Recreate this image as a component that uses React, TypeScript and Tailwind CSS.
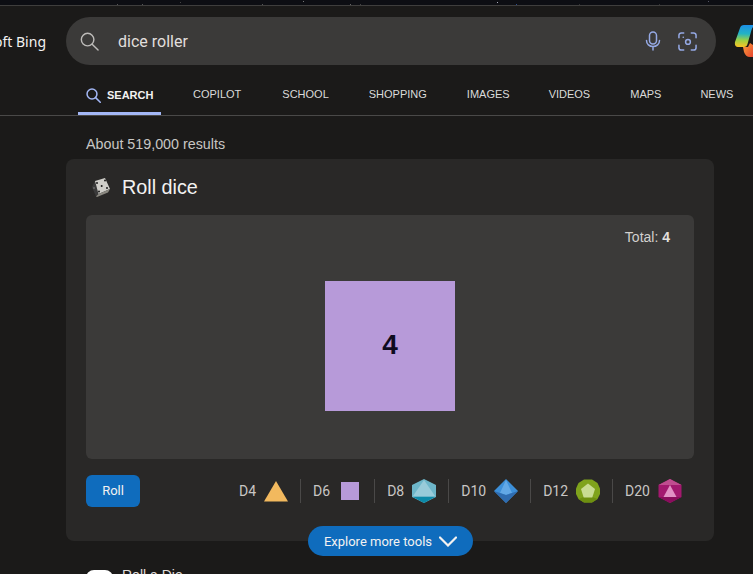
const arial = { fontFamily: '"Liberation Sans", Arial, sans-serif' };

const tabs = [
  { label: 'COPILOT', gap: '' },
  { label: 'SCHOOL', gap: 'ml-[41px]' },
  { label: 'SHOPPING', gap: 'ml-[40px]' },
  { label: 'IMAGES', gap: 'ml-[40px]' },
  { label: 'VIDEOS', gap: 'ml-[39px]' },
  { label: 'MAPS', gap: 'ml-[40px]' },
  { label: 'NEWS', gap: 'ml-[39px]' },
];

function TopStrip() {
  const dots = [
    [117, 4, '#555'], [142, 4, '#555'], [180, 2, '#444'], [262, 4, '#555'], [303, 1, '#777'], [350, 4, '#666'],
    [360, 4, '#444'], [497, 2, '#aab'], [516, 4, '#2a4a8a'], [579, 4, '#333'], [659, 4, '#333'], [708, 1, '#556'],
  ] as const;
  return (
    <svg viewBox="0 0 753 5" className="block h-[5px] w-[753px]">
      {dots.map(([x, y, c]) => (
        <rect key={x} x={x} y={y} width="1" height="1" fill={c} />
      ))}
    </svg>
  );
}

function SearchIcon({ className, width }: { className: string; width: number }) {
  return (
    <svg viewBox="0 0 20 20" fill="none" stroke="currentColor" strokeWidth={width} className={className}>
      <circle cx="8" cy="8" r="6.6" />
      <path d="M12.8 12.8 19 19" strokeLinecap="round" />
    </svg>
  );
}

function MicIcon() {
  return (
    <svg viewBox="0 0 16 20" fill="none" stroke="#95a9e4" strokeWidth="1.5" className="h-5 w-4" strokeLinecap="round">
      <rect x="4.5" y="1" width="7" height="12" rx="3.5" />
      <path d="M1.5 9.5c0 3.6 2.9 6 6.5 6s6.500-2.400 6.500-6M8 15.500V19" />
    </svg>
  );
}

function VisualIcon() {
  return (
    <svg viewBox="0 0 20 20" fill="none" stroke="#95a9e4" strokeWidth="1.600" className="h-[19px] w-[19px]" strokeLinecap="round">
      <path d="M1 6V3.500A2.500 2.500 0 0 1 3.500 1H6M14 1h2.500A2.500 2.500 0 0 1 19 3.500V6M19 14v2.500a2.500 2.500 0 0 1-2.500 2.500H14M6 19H3.500A2.500 2.500 0 0 1 1 16.500V14" />
      <circle cx="10.500" cy="10.500" r="2.500" />
      <path d="M5.500 5.500h.1" />
    </svg>
  );
}

function CopilotLogo() {
  return (
    <svg viewBox="0 0 32 34" className="h-[34px] w-8 shrink-0">
      <defs>
        <linearGradient id="cpA" x1="0.5" y1="0" x2="0.45" y2="1">
          <stop offset="0" stopColor="#1c8fe8" />
          <stop offset="0.4" stopColor="#22b3c4" />
          <stop offset="0.7" stopColor="#9dd143" />
          <stop offset="1" stopColor="#f7c326" />
        </linearGradient>
        <linearGradient id="cpB" x1="0" y1="0" x2="1" y2="1">
          <stop offset="0" stopColor="#f9a13a" />
          <stop offset="1" stopColor="#e8452f" />
        </linearGradient>
      </defs>
      <path d="M6 4C6.500 2 8 1 10 1h14c-4 0-5.500 2-6.500 5l-4 14c-.500 2-1.500 3-3.500 3H4c-2.500 0-3.500-2-3-5z" fill="url(#cpA)" />
      <path d="M9 23h5l2-4 3 2v12h-3c-3 0-5-2-6-5z" fill="url(#cpB)" />
    </svg>
  );
}

function DiceEmblem() {
  return (
    <svg viewBox="0 0 20 20" className="h-5 w-5 shrink-0">
      <path d="M1 10 4 4l3.500 13L5 19.500z" fill="#3a3a3a" />
      <path d="M4 4 14 1l5 11-11.500 5z" fill="#cfcec9" />
      <path d="M5 19.500 7.500 17 19 12l-2 3.500L6 20z" fill="#8a8880" />
      <g fill="#1c1c1c">
        <circle cx="6" cy="6" r="1" />
        <circle cx="14" cy="3.500" r="1" />
        <circle cx="10.700" cy="9" r="1" />
        <circle cx="8" cy="14.500" r="1" />
        <circle cx="16" cy="11" r="1" />
      </g>
      <circle cx="3" cy="11" r="0.700" fill="#999" />
    </svg>
  );
}

function D4() {
  return (
    <svg viewBox="0 0 24 21" className="h-[21px] w-6">
      <path d="M12 0 24 20.500H0z" fill="#f2b95e" />
    </svg>
  );
}

function D6() {
  return <div className="h-[18px] w-[18px] bg-[#b79ad9]" />;
}

function D8() {
  return (
    <svg viewBox="0 0 24 24" className="h-6 w-6">
      <path d="M12 0 24 6v12l-12 6L0 18V6z" fill="#6db6c9" />
      <path d="M12 1 23 17H1z" fill="#98cbd9" />
      <path d="M1 18h22l-11 6z" fill="#0d8aa8" />
    </svg>
  );
}

function D10() {
  return (
    <svg viewBox="0 0 24 24" className="h-6 w-6">
      <path d="M12 0 24 12 12 24 0 12z" fill="#3c8fd8" />
      <path d="M12 1 18 14l-6 2-6-2z" fill="#62a8e6" />
      <path d="M0 12l6 2 6 2 6-2 6-2-12 12z" fill="#2f6cb0" />
    </svg>
  );
}

function D12() {
  return (
    <svg viewBox="0 0 24 24" className="h-6 w-6">
      <path d="M8 .5h8l5.500 3.500L24 9.500v5.500l-2.500 5L16 23.500H8L2.500 20 0 15V9.500L2.500 4z" fill="#7fa31c" />
      <path d="M2.500 20 8 23.500h8l5.500-3.500-5-2h-9z" fill="#6e9010" />
      <path d="M12 4.500 19 10l-2.700 8.500H7.700L5 10z" fill="#c9dc93" />
    </svg>
  );
}

function D20() {
  return (
    <svg viewBox="0 0 24 24" className="h-6 w-6">
      <path d="M12 0 23.500 6v12L12 24 .5 18V6z" fill="#a3196f" />
      <path d="M12 0 23.500 6 12 6 .5 6z" fill="#c04d90" />
      <path d="M12 6 18.500 18h-13z" fill="#e291c4" />
      <path d="M.5 18h23L12 24z" fill="#8a0d5c" />
    </svg>
  );
}

const dice = [
  { label: 'D4', Icon: D4 },
  { label: 'D6', Icon: D6 },
  { label: 'D8', Icon: D8 },
  { label: 'D10', Icon: D10 },
  { label: 'D12', Icon: D12 },
  { label: 'D20', Icon: D20 },
];

export default function App() {
  return (
    <div className="h-[574px] w-[753px] overflow-hidden bg-[#1b1a19]" style={arial}>
      <div className="h-[6px] border-b border-[#3f3e3d] bg-[#0d0e13]">
        <TopStrip />
      </div>

      <header className="mt-[11px] flex h-[48px] items-center">
        <div className="flex w-[66px] shrink-0 justify-end overflow-hidden pr-5">
          <span className="whitespace-nowrap font-['Noto_Sans'] text-[14px] text-[#f3f2f1]">Microsoft Bing</span>
        </div>
        <div className="flex h-12 w-[650px] shrink-0 items-center rounded-full bg-[#3b3a39] pl-[14px] pr-[19px]">
          <SearchIcon width={1.5} className="h-[19px] w-[19px] text-[#bdbbb9]" />
          <span className="ml-[19px] flex-1 pt-[1px] font-['Roboto'] text-[16px] text-[#e1dfdd]">dice roller</span>
          <MicIcon />
          <div className="ml-[17px]">
            <VisualIcon />
          </div>
        </div>
        <div className="ml-[18px]">
          <CopilotLogo />
        </div>
      </header>

      <nav className="mt-[17px] flex h-[34px] items-start border-b border-[#4a4948] pl-[78px] text-[11px] text-[#dadada]">
        <div className="flex h-[33px] w-[83px] items-center gap-[6px] border-b-[3px] border-[#a3b7f5] pb-[4px] pl-2 font-bold text-[#f3f2f1]">
          <SearchIcon width={2} className="h-[15px] w-[15px] text-[#a3b7f5]" />
          SEARCH
        </div>
        <div className="ml-[32px] flex h-[25px] items-center">
          {tabs.map((t) => (
            <span key={t.label} className={t.gap}>{t.label}</span>
          ))}
        </div>
      </nav>

      <p className="ml-[86px] mt-[20px] text-[14.300px] leading-[17px] text-[#c8c6c4]">About 519,000 results</p>

      <section className="relative ml-[66px] mt-[6px] h-[382px] w-[648px] rounded-lg bg-[#292827] px-5 pt-[16px]">
        <div className="flex h-6 items-center gap-[11px] pl-[5px]">
          <DiceEmblem />
          <h2 className="text-[19.800px] font-normal leading-6 text-[#f3f2f1]">Roll dice</h2>
        </div>

        <div className="relative mt-[16px] flex h-[244px] items-center justify-center rounded-md bg-[#3b3a39] pt-[18px]">
          <div className="absolute right-6 top-[12px] text-[14px] text-[#d2d0ce]">
            Total: <b className="text-[#e1dfdd]">4</b>
          </div>
          <div className="flex h-[130px] w-[130px] items-center justify-center bg-[#b79ad9] pb-[3px] text-[28px] font-bold text-[#0f0c1f]">
            4
          </div>
        </div>

        <div className="mt-4 flex items-center justify-between font-['Roboto']">
          <button className="h-8 w-[54px] rounded-md bg-[#0f6cbd] text-[13px] text-[#f3f2f1]">Roll</button>
          <div className="flex items-center pr-[12px] text-[14px] text-[#c8c6c4]">
            {dice.map(({ label, Icon }, i) => (
              <div key={label} className={`flex h-6 w-auto items-center gap-2 ${i > 0 ? 'ml-3 border-l border-[#4a4948] pl-3' : ''}`}>
                <span>{label}</span>
                <div className="flex h-6 w-6 items-center justify-center">
                  <Icon />
                </div>
              </div>
            ))}
          </div>
        </div>

        <button className="absolute bottom-[-15px] left-[242px] flex h-[30px] w-[165px] items-center justify-center gap-[7px] rounded-full bg-[#0f6cbd] font-['Roboto'] text-[13px] text-[#f3f2f1]">
          <span className="pt-[1px]">Explore more tools</span>
          <svg viewBox="0 0 18 11" fill="none" stroke="#f3f2f1" strokeWidth="2.200" className="mt-[1px] h-[11px] w-[18px]">
            <path d="M1 1.500 9 9.500 17 1.500" strokeLinecap="round" />
          </svg>
        </button>
      </section>

      <div className="ml-[86px] mt-[24px] flex gap-[9px]">
        <div className="mt-[5px] h-10 w-[27px] rounded-lg bg-white" />
        <span className="pt-[2px] text-[14px] leading-[16px] text-[#e1dfdd]">Roll a Die</span>
      </div>
    </div>
  );
}
